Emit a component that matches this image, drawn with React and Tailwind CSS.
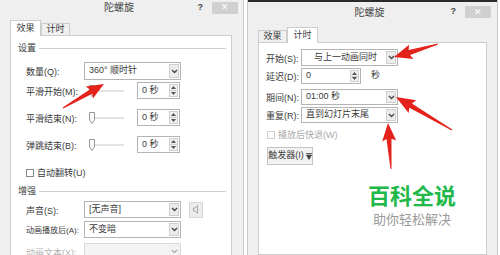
import React from "react";

const Chevron = () => (
  <svg width="7" height="5" viewBox="0 0 7 5">
    <path d="M1 1 L3.5 3.5 L6 1" fill="none" stroke="#444" strokeWidth="1.3" />
  </svg>
);

const Combo = ({ text, w = "w-[97px]", h = "h-[17px]", disabled, center }) => (
  <div
    className={`flex ${w} ${h} items-stretch border ${
      disabled ? "border-[#d9d9d9] bg-[#f4f4f4]" : "border-[#b4b4b4] bg-white"
    }`}
  >
    <span
      className={`flex flex-1 items-center whitespace-nowrap pl-[4px] text-[9px] ${
        center ? "justify-center" : ""
      }`}
    >
      {text}
    </span>
    <span
      className={`m-[1px] flex w-[10px] items-center justify-center border ${
        disabled ? "border-[#e2e2e2] opacity-40" : "border-[#cfcfcf] bg-[#ececec]"
      }`}
    >
      <Chevron />
    </span>
  </div>
);

const Spinner = ({ text, w = "w-[43px]", h = "h-[17px]" }) => (
  <div className={`flex ${w} ${h} border border-[#b4b4b4] bg-white`}>
    <span className="flex flex-1 items-center whitespace-nowrap pl-[4px] text-[9px]">{text}</span>
    <span className="m-[1px] flex w-[9px] flex-col border border-[#d0d0d0] bg-[#f0f0f0]">
      <span className="flex flex-1 items-center justify-center border-b border-[#d0d0d0]">
        <svg width="5" height="3" viewBox="0 0 5 3">
          <path d="M0 3 L2.5 0 L5 3Z" fill="#555" />
        </svg>
      </span>
      <span className="flex flex-1 items-center justify-center">
        <svg width="5" height="3" viewBox="0 0 5 3">
          <path d="M0 0 L2.5 3 L5 0Z" fill="#555" />
        </svg>
      </span>
    </span>
  </div>
);

const Slider = () => (
  <div className="flex w-[53px] items-center pl-[5px]">
    <div className="relative flex h-[12px] w-[35px] items-center">
      <div className="h-[2px] w-full bg-[#e2e2e2]" />
      <svg className="absolute left-0 top-0" width="6" height="12" viewBox="0 0 6 12">
        <path d="M0.5 0.5 H5.5 V8 L3 11.5 L0.5 8Z" fill="#fafafa" stroke="#999" />
      </svg>
    </div>
  </div>
);

const Check = ({ label, disabled }) => (
  <div className={`flex items-center gap-[3px] ${disabled ? "text-[#aaa]" : ""}`}>
    <span
      className={`h-[8px] w-[8px] border bg-white ${
        disabled ? "border-[#cfcfcf]" : "border-[#888]"
      }`}
    />
    <span className="whitespace-nowrap text-[9px] leading-[12px]">{label}</span>
  </div>
);

const GroupHead = ({ text }) => (
  <div className="flex h-[12px] items-center pl-[7px] pr-[5px]">
    <span className="text-[9px] leading-[12px]">{text}</span>
    <span className="ml-[3px] h-px flex-1 bg-[#cfcfcf]" />
  </div>
);

const TitleBar = ({ mr }) => (
  <div className="flex h-[20px] items-center">
    <div className="flex-1" />
    <span className="text-[10px] font-normal text-[#444]">陀螺旋</span>
    <div className={`flex flex-1 items-center justify-end gap-[9px] ${mr}`}>
      <span className="text-[9px] font-bold text-[#444]">?</span>
      <span className="flex h-[12px] w-[26px] items-center justify-center bg-[#d0d0d0] text-[9px] leading-none text-white">
        ✕
      </span>
    </div>
  </div>
);

const Tab = ({ text, active }) =>
  active ? (
    <div className="-mb-px z-10 flex h-[16px] w-[31px] items-center justify-center border border-b-0 border-[#cdcdcd] bg-white text-[9px]">
      {text}
    </div>
  ) : (
    <div className="flex h-[12px] w-[29px] items-center justify-center border border-b-0 border-[#cdcdcd] bg-[#f0f0f0] text-[9px]">
      {text}
    </div>
  );

const Label = ({ text, w, dim, small }) => (
  <span
    className={`${w} shrink-0 whitespace-nowrap pt-[2px] leading-[12px] ${
      small ? "text-[8px]" : "text-[9px]"
    } ${dim ? "text-[#b5b5b5]" : ""}`}
  >
    {text}
  </span>
);

const arrow = (x1, y1, x2, y2, hl = 15, hw = 15, sw = 5) => {
  const dx = x2 - x1;
  const dy = y2 - y1;
  const len = Math.hypot(dx, dy);
  const ux = dx / len;
  const uy = dy / len;
  const px = -uy;
  const py = ux;
  const bx = x2 - ux * hl;
  const by = y2 - uy * hl;
  const p = (x, y) => `${x.toFixed(1)},${y.toFixed(1)}`;
  return [
    p(x1 + px * 0.5, y1 + py * 0.5),
    p(bx + (px * sw) / 2, by + (py * sw) / 2),
    p(bx - ux * 2 + (px * hw) / 2, by - uy * 2 + (py * hw) / 2),
    p(x2, y2),
    p(bx - ux * 2 - (px * hw) / 2, by - uy * 2 - (py * hw) / 2),
    p(bx - (px * sw) / 2, by - (py * sw) / 2),
    p(x1 - px * 0.5, y1 - py * 0.5),
  ].join(" ");
};

export default function App() {
  return (
    <div className="relative flex h-[255px] w-[500px] gap-[3px] overflow-hidden bg-white font-['Liberation_Sans','Noto_Sans_CJK_SC',sans-serif] text-[#3a3a3a]">
      {/* left dialog */}
      <div className="flex w-[244px] flex-col border-r border-[#c9c9c9] bg-[#efefef]">
        <div className="h-[2px] bg-[#2b2b2b]" />
        <TitleBar mr="mr-[5px]" />
        <div className="ml-[10px] mt-[5px] flex items-end">
          <Tab text="效果" active />
          <Tab text="计时" />
        </div>
        <div className="ml-[10px] flex w-[222px] flex-1 flex-col border border-[#cdcdcd] bg-white pt-[6px]">
          <GroupHead text="设置" />
          <div className="mt-[8px] flex items-center pl-[15px]">
            <Label text="数量(Q):" w="w-[58px]" />
            <Combo text="360° 顺时针" h="h-[18px]" />
          </div>
          <div className="mt-[2px] flex items-center pl-[15px]">
            <Label text="平滑开始(M):" w="w-[58px]" />
            <Slider />
            <Spinner text="0 秒" />
          </div>
          <div className="mt-[10px] flex items-center pl-[15px]">
            <Label text="平滑结束(N):" w="w-[58px]" />
            <Slider />
            <Spinner text="0 秒" />
          </div>
          <div className="mt-[10px] flex items-center pl-[15px]">
            <Label text="弹跳结束(B):" w="w-[58px]" />
            <Slider />
            <Spinner text="0 秒" />
          </div>
          <div className="mt-[14px] pl-[15px]">
            <Check label="自动翻转(U)" />
          </div>
          <div className="mt-[6px]">
            <GroupHead text="增强" />
          </div>
          <div className="mt-[4px] flex items-center pl-[15px]">
            <Label text="声音(S):" w="w-[58px]" />
            <Combo text="[无声音]" />
            <span className="ml-[8px] flex h-[16px] w-[14px] items-center justify-center border border-[#d6d6d6] bg-[#ececec]">
              <svg width="6" height="9" viewBox="0 0 6 9">
                <path d="M0.5 3 H2 L4.5 0.8 V8.2 L2 6 H0.5Z" fill="none" stroke="#999" strokeWidth="0.8" />
              </svg>
            </span>
          </div>
          <div className="mt-[3px] flex items-center pl-[15px]">
            <Label text="动画播放后(A):" w="w-[58px]" small />
            <Combo text="不变暗" />
          </div>
          <div className="mt-[5px] flex items-center pl-[15px]">
            <Label text="动画文本(X):" w="w-[58px]" dim />
            <Combo text="" disabled />
          </div>
        </div>
      </div>

      {/* right dialog */}
      <div className="flex w-[251px] flex-col border-x border-[#c9c9c9] bg-[#efefef]">
        <div className="h-[2px] bg-[#2b2b2b]" />
        <TitleBar mr="mr-[6px]" />
        <div className="ml-[10px] mt-[5px] flex items-end">
          <Tab text="效果" />
          <Tab text="计时" active />
        </div>
        <div className="ml-[10px] flex w-[229px] flex-1 flex-col border border-[#cdcdcd] bg-white pt-[6px]">
          <div className="flex items-center pl-[7px]">
            <Label text="开始(S):" w="w-[35px]" />
            <Combo text="与上一动画同时" center />
          </div>
          <div className="mt-[2px] flex items-center pl-[7px]">
            <Label text="延迟(D):" w="w-[35px]" />
            <Spinner text="0" w="w-[60px]" h="h-[16px]" />
            <span className="ml-[10px] text-[9px]">秒</span>
          </div>
          <div className="mt-[5px] flex items-center pl-[7px]">
            <Label text="期间(N):" w="w-[35px]" />
            <Combo text="01:00 秒" h="h-[16px]" />
          </div>
          <div className="mt-[2px] flex items-center pl-[7px]">
            <Label text="重复(R):" w="w-[35px]" />
            <Combo text="直到幻灯片末尾" h="h-[16px]" />
          </div>
          <div className="mt-[6px] pl-[8px]">
            <Check label="播放后快退(W)" disabled />
          </div>
          <div className="ml-[8px] mt-[6px] flex h-[18px] w-[46px] items-center justify-center gap-[2px] whitespace-nowrap border border-[#c4c4c4] bg-[#f3f3f3] text-[9px]">
            <span>触发器(I)</span>
            <svg width="6" height="7" viewBox="0 0 6 7">
              <path d="M0 0.5 H6 M0.5 2 L3 6.5 L5.5 2Z" stroke="#444" fill="#444" strokeWidth="0.8" />
            </svg>
          </div>
          <div className="ml-[109px] mt-[21px] flex w-fit flex-col items-center">
            <span className="text-[22px] font-bold leading-[22px] text-[#21b84a]">百科全说</span>
            <span className="mt-[5px] text-[13px] leading-[13px] text-[#9a9a9a]">助你轻松解决</span>
          </div>
        </div>
      </div>

      {/* annotation arrows */}
      <svg className="pointer-events-none absolute left-0 top-0" width="500" height="255" viewBox="0 0 500 255">
        <g fill="#e3221c">
          <polygon points={arrow(63, 108, 104, 84, 15, 14, 5)} />
          <polygon points={arrow(438, 44, 394, 57, 16, 15, 5)} />
          <polygon points={arrow(452, 130, 396, 97, 17, 15, 5)} />
          <polygon points={arrow(391, 169, 388, 123, 16, 14, 5)} />
        </g>
      </svg>
    </div>
  );
}
